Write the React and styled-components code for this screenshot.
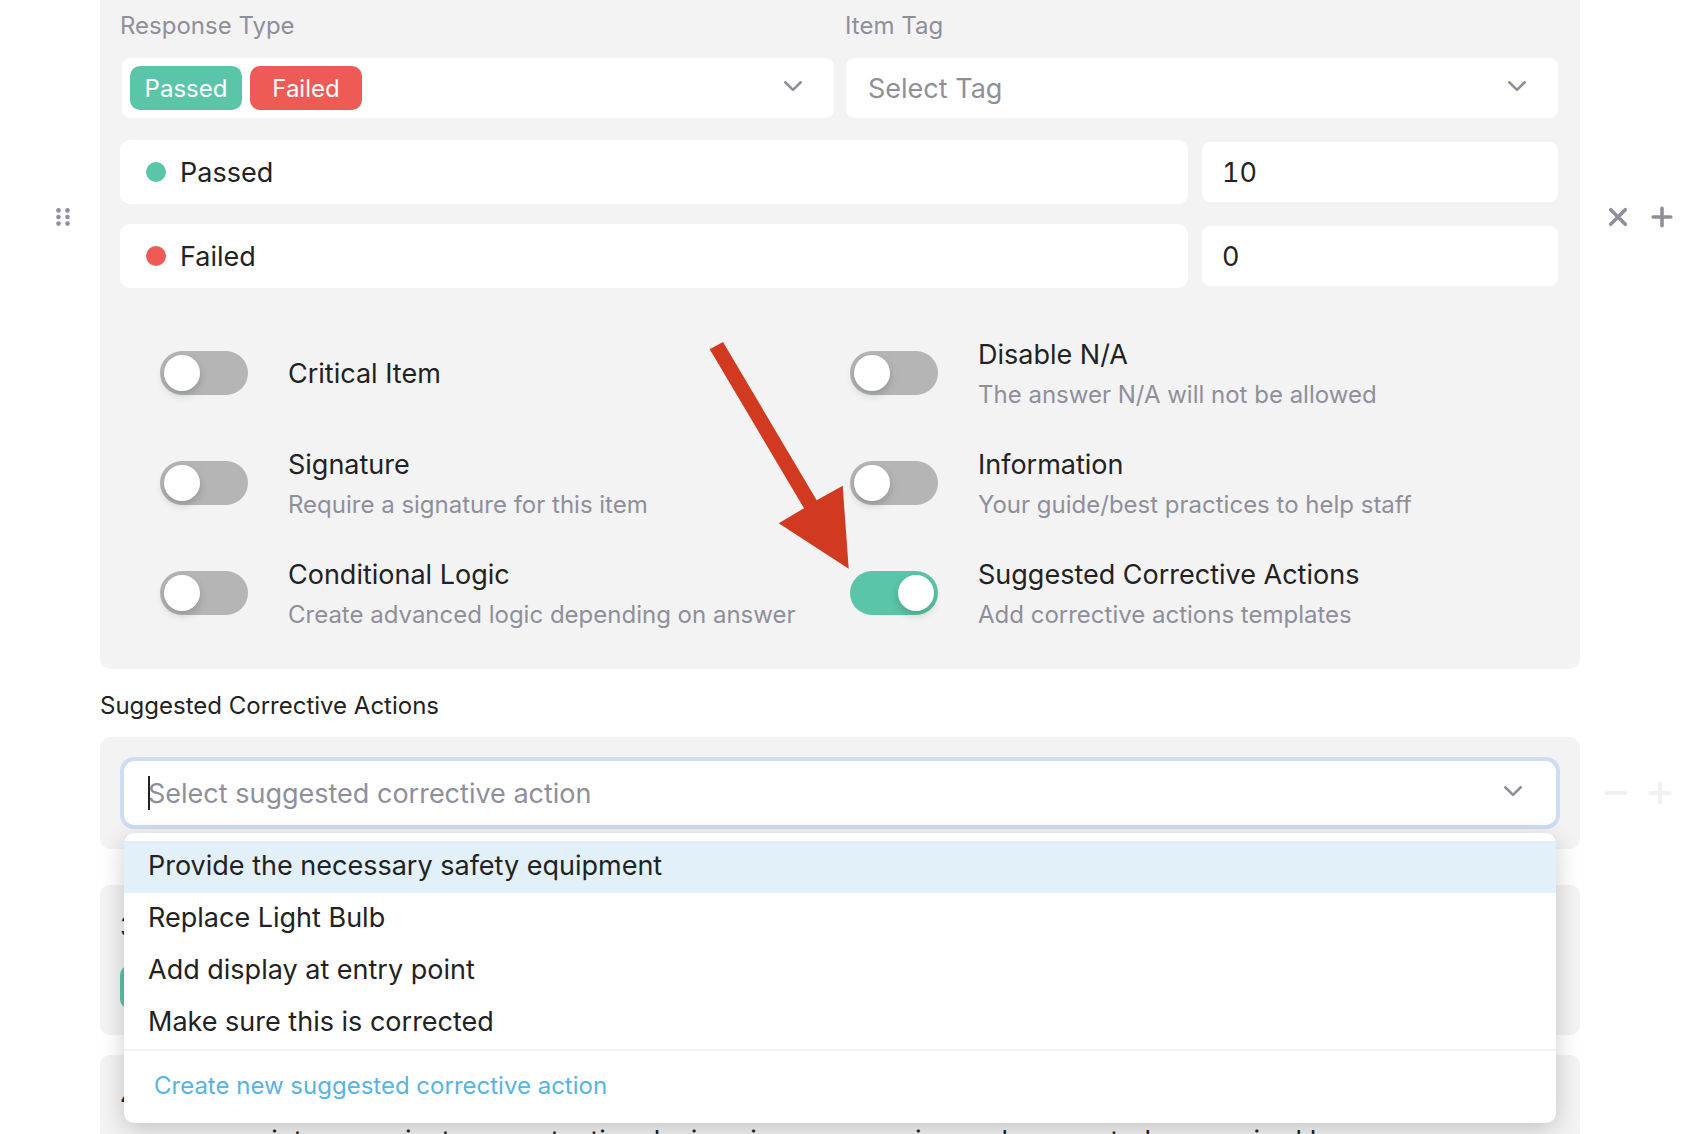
import { useState } from "react";
import styled, { createGlobalStyle } from "styled-components";

const SCORES = [
  { label: "Passed", score: "10", color: "#5bc5a9" },
  { label: "Failed", score: "0", color: "#ee5b56" },
];

const OPTIONS = [
  { id: "critical", title: "Critical Item" },
  {
    id: "disableNa",
    title: "Disable N/A",
    description: "The answer N/A will not be allowed",
  },
  {
    id: "signature",
    title: "Signature",
    description: "Require a signature for this item",
  },
  {
    id: "information",
    title: "Information",
    description: "Your guide/best practices to help staff",
  },
  {
    id: "logic",
    title: "Conditional Logic",
    description: "Create advanced logic depending on answer",
  },
  {
    id: "corrective",
    title: "Suggested Corrective Actions",
    description: "Add corrective actions templates",
    pointed: true,
  },
];

const SUGGESTIONS = [
  "Provide the necessary safety equipment",
  "Replace Light Bulb",
  "Add display at entry point",
  "Make sure this is corrected",
];

const ChevronIcon = () => (
  <svg width="18" height="11" viewBox="0 0 18 11" aria-hidden="true">
    <path
      d="M1.3 1.3 L9 8.9 L16.7 1.3"
      fill="none"
      stroke="#8f8f9b"
      strokeWidth="2.6"
      strokeLinecap="round"
      strokeLinejoin="round"
    />
  </svg>
);

const DragIcon = () => (
  <svg width="14" height="18" viewBox="0 0 14 18" fill="#8f8f9b" aria-hidden="true">
    {[2.4, 9, 15.6].map((y) => (
      <g key={y}>
        <circle cx="2.5" cy={y} r="2.3" />
        <circle cx="11.5" cy={y} r="2.3" />
      </g>
    ))}
  </svg>
);

const StrokeIcon = ({ d, size = 22, width = 3.6 }) => (
  <svg width={size} height={size} viewBox="0 0 22 22" aria-hidden="true">
    <path
      d={d}
      fill="none"
      stroke="currentColor"
      strokeWidth={width}
      strokeLinecap="round"
    />
  </svg>
);

const ArrowDrawing = () => (
  <svg width="140" height="228" viewBox="0 0 140 228" aria-hidden="true">
    <path
      d="M0.7 8.3 L14 1 L107.7 159.3 L133.7 144.7 L139.7 227.7 L69.7 182.3 L95 167.3 Z"
      fill="#d13a20"
    />
  </svg>
);

export default function App() {
  const [enabled, setEnabled] = useState({ corrective: true });
  const [scores, setScores] = useState(SCORES.map((item) => item.score));
  const [query, setQuery] = useState("");

  return (
    <Page>
      <GlobalStyle />
      <Row>
        <DragHandle aria-label="Move item">
          <DragIcon />
        </DragHandle>
        <ItemPanel>
          <LabelGrid>
            <FieldLabel id="response-type">Response Type</FieldLabel>
            <FieldLabel as="label" htmlFor="item-tag">
              Item Tag
            </FieldLabel>
          </LabelGrid>
          <SelectGrid>
            <TagSelect aria-labelledby="response-type" aria-haspopup="listbox">
              {SCORES.map((item) => (
                <Tag key={item.label} $color={item.color}>
                  {item.label}
                </Tag>
              ))}
              <ChevronSlot>
                <ChevronIcon />
              </ChevronSlot>
            </TagSelect>
            <SelectBox>
              <Select id="item-tag">
                <option>Select Tag</option>
              </Select>
              <ChevronSlot>
                <ChevronIcon />
              </ChevronSlot>
            </SelectBox>
          </SelectGrid>
          <ScoreList>
            {SCORES.map((item, index) => (
              <ScoreRow key={item.label}>
                <ScoreName htmlFor={`score-${index}`}>
                  <Dot $color={item.color} />
                  {item.label}
                </ScoreName>
                <ScoreInput
                  id={`score-${index}`}
                  value={scores[index]}
                  onChange={(e) =>
                    setScores((prev) =>
                      prev.map((s, i) => (i === index ? e.target.value : s))
                    )
                  }
                />
              </ScoreRow>
            ))}
          </ScoreList>
          <OptionGrid>
            {OPTIONS.map((option) => (
              <Option key={option.id}>
                <SwitchBox>
                  <Switch
                    id={option.id}
                    type="checkbox"
                    role="switch"
                    checked={!!enabled[option.id]}
                    onChange={(e) =>
                      setEnabled((prev) => ({
                        ...prev,
                        [option.id]: e.target.checked,
                      }))
                    }
                  />
                  {option.pointed && (
                    <Pointer>
                      <ArrowDrawing />
                    </Pointer>
                  )}
                </SwitchBox>
                <OptionLabel htmlFor={option.id}>
                  <OptionTitle>{option.title}</OptionTitle>
                  {option.description && (
                    <OptionText>{option.description}</OptionText>
                  )}
                </OptionLabel>
              </Option>
            ))}
          </OptionGrid>
        </ItemPanel>
        <Actions $top={195} $left={16}>
          <IconButton aria-label="Remove item">
            <StrokeIcon d="M3 3 L19 19 M19 3 L3 19" size={20} width={4} />
          </IconButton>
          <IconButton aria-label="Add item">
            <StrokeIcon d="M11 2.2 V19.8 M2.2 11 H19.8" />
          </IconButton>
        </Actions>
      </Row>

      <SectionLabel htmlFor="corrective-action">
        Suggested Corrective Actions
      </SectionLabel>
      <Row>
        <SuggestPanel>
          <Combo>
            <Caret />
            <ComboInput
              id="corrective-action"
              role="combobox"
              aria-expanded="true"
              aria-controls="suggestions"
              placeholder="Select suggested corrective action"
              value={query}
              onChange={(e) => setQuery(e.target.value)}
            />
            <ChevronSlot>
              <ChevronIcon />
            </ChevronSlot>
          </Combo>
          <Dropdown>
            <SuggestionList id="suggestions" role="listbox">
              {SUGGESTIONS.map((text, index) => (
                <Suggestion
                  key={text}
                  role="option"
                  aria-selected={index === 0}
                  $active={index === 0}
                >
                  {text}
                </Suggestion>
              ))}
            </SuggestionList>
            <DropdownFooter>
              <CreateLink href="#create">
                Create new suggested corrective action
              </CreateLink>
            </DropdownFooter>
          </Dropdown>
        </SuggestPanel>
        <Actions $top={34} $left={14} $faded>
          <IconButton aria-label="Remove corrective action">
            <StrokeIcon d="M2 11 H20" size={24} />
          </IconButton>
          <IconButton aria-label="Add corrective action">
            <StrokeIcon d="M11 2 V20 M2 11 H20" size={24} />
          </IconButton>
        </Actions>
      </Row>

      <NextItems>
        <NextItem>
          <ItemNumber>3.</ItemNumber>
          <TagRow>
            <Tag $color="#5bc5a9" />
          </TagRow>
        </NextItem>
        <NextItem>
          <ItemNumber>4.</ItemNumber>
          <ItemText>
            common points or against our protective devices in every service
            and connected as required by
          </ItemText>
        </NextItem>
      </NextItems>
    </Page>
  );
}

const GlobalStyle = createGlobalStyle`
  * {
    box-sizing: border-box;
  }
  body {
    margin: 0;
    background-color: #fff;
    color: #222;
    font-family: Inter, "Liberation Sans", sans-serif;
    font-size: 27px;
  }
  button, input, select {
    font: inherit;
    color: inherit;
    border: none;
    outline: none;
    padding: 0;
  }
`;

const Page = styled.main`
  height: 100vh;
  overflow: hidden;
`;

const Row = styled.div`
  display: grid;
  grid-template-columns: 100px 1fr 128px;
  align-items: start;
`;

const DragHandle = styled.button`
  justify-self: end;
  display: flex;
  justify-content: center;
  align-items: center;
  width: 44px;
  height: 44px;
  margin: 195px 15px 0 0;
  background: none;
  cursor: grab;
`;

const ItemPanel = styled.section`
  grid-column: 2;
  padding: 12px 22px 21px 20px;
  border-radius: 0 0 10px 10px;
  background-color: #f3f3f3;
`;

const LabelGrid = styled.div`
  display: grid;
  grid-template-columns: 1fr 1fr;
  gap: 12px;
  margin-bottom: 18px;
`;

const SelectGrid = styled.div`
  display: grid;
  grid-template-columns: 1fr 1fr;
  gap: 12px;
  padding-left: 2px;
`;

const FieldLabel = styled.span`
  font-size: 24px;
  line-height: 28px;
  color: #8f8f9b;
`;

const TagSelect = styled.button`
  display: flex;
  align-items: center;
  gap: 8px;
  height: 60px;
  padding: 0 32px 0 8px;
  border-radius: 8px;
  background-color: #fff;
  cursor: pointer;
`;

const Tag = styled.span`
  display: flex;
  justify-content: center;
  align-items: center;
  width: 112px;
  height: 44px;
  border-radius: 10px;
  background-color: ${(props) => props.$color};
  color: #fff;
  font-size: 24px;
`;

const ChevronSlot = styled.span`
  display: flex;
  margin-left: auto;
  padding-bottom: 4px;
  pointer-events: none;
`;

const SelectBox = styled.div`
  display: grid;
  grid-template-columns: 1fr 50px;
  align-items: center;
  height: 60px;
  border-radius: 8px;
  background-color: #fff;

  ${ChevronSlot} {
    grid-area: 1 / 2;
    margin-left: 0;
  }
`;

const Select = styled.select`
  grid-area: 1 / 1 / 2 / 3;
  height: 60px;
  padding-left: 22px;
  appearance: none;
  background: none;
  color: #8f8f9b;
`;

const ScoreList = styled.div`
  display: flex;
  flex-direction: column;
  gap: 20px;
  margin-top: 22px;
`;

const ScoreRow = styled.div`
  display: grid;
  grid-template-columns: 3fr 1fr;
  gap: 14px;
  align-items: center;
`;

const ScoreName = styled.label`
  display: flex;
  align-items: center;
  gap: 14px;
  height: 64px;
  padding-left: 26px;
  border-radius: 10px;
  background-color: #fff;
`;

const Dot = styled.span`
  width: 20px;
  height: 20px;
  border-radius: 50%;
  background-color: ${(props) => props.$color};
`;

const ScoreInput = styled.input`
  width: 100%;
  height: 60px;
  padding-left: 20px;
  border-radius: 8px;
  background-color: #fff;
  font-variant-numeric: tabular-nums;
`;

const OptionGrid = styled.div`
  display: grid;
  grid-template-columns: 1fr 1fr;
  grid-auto-rows: 110px;
  margin-top: 30px;
  padding: 0 18px 0 40px;
`;

const Option = styled.div`
  display: flex;
  align-items: center;
  gap: 40px;
`;

const SwitchBox = styled.div`
  position: relative;
  display: flex;
`;

const Switch = styled.input`
  display: flex;
  width: 88px;
  height: 44px;
  margin: 0;
  padding: 4px;
  appearance: none;
  border-radius: 22px;
  background-color: #b5b5b5;
  cursor: pointer;

  &::before {
    content: "";
    width: 36px;
    height: 36px;
    border-radius: 50%;
    background-color: #fff;
    box-shadow: 0 4px 8px rgba(0, 35, 11, 0.2);
  }

  &:checked {
    justify-content: flex-end;
    background-color: #5bc5a9;
  }
`;

// sits over the grid, its tip at the corner of the switch
const Pointer = styled.span`
  position: absolute;
  right: 100%;
  bottom: 100%;
  display: flex;
  padding: 0 1px 2px 0;
  pointer-events: none;
`;

const OptionLabel = styled.label`
  display: flex;
  flex-direction: column;
  padding-top: 2px;
  white-space: nowrap;
`;

const OptionTitle = styled.span`
  line-height: 42px;
`;

const OptionText = styled.span`
  font-size: 24px;
  line-height: 38px;
  color: #8f8f9b;
`;

const Actions = styled.div`
  grid-column: 3;
  display: flex;
  padding: ${(props) => props.$top}px 0 0 ${(props) => props.$left}px;
  color: ${(props) => (props.$faded ? "#f1f1f1" : "#8f8f9b")};
`;

const IconButton = styled.button`
  display: flex;
  justify-content: center;
  align-items: center;
  width: 44px;
  height: 44px;
  background: none;
  cursor: pointer;
`;

const SectionLabel = styled.label`
  display: block;
  padding: 23px 100px 17px;
  font-size: 24px;
  line-height: 28px;
`;

const SuggestPanel = styled.section`
  grid-column: 2;
  position: relative;
  padding: 20px;
  border-radius: 10px;
  background-color: #f3f3f3;
`;

const Combo = styled.div`
  position: relative;
  display: flex;
  align-items: center;
  height: 72px;
  padding: 0 34px 0 24px;
  border: 4px solid #cfddf4;
  border-radius: 14px;
  background-color: #fff;
`;

const Caret = styled.span`
  position: absolute;
  left: 24px;
  width: 2px;
  height: 34px;
  background-color: #222;
`;

const ComboInput = styled.input`
  flex: 1;
  height: 60px;
  background: none;
  caret-color: transparent;

  &::placeholder {
    color: #8f8f9b;
  }
`;

const Dropdown = styled.div`
  position: absolute;
  z-index: 1;
  top: 96px;
  left: 24px;
  right: 24px;
  padding-top: 8px;
  border-radius: 10px;
  background-color: #fff;
  box-shadow: 0 6px 24px rgba(0, 0, 0, 0.2);
`;

const SuggestionList = styled.ul`
  margin: 0;
  padding: 0;
  list-style: none;
`;

const Suggestion = styled.li`
  padding: 0 24px 2px;
  line-height: 50px;
  background-color: ${(props) => (props.$active ? "#e2f0fa" : "#fff")};
  cursor: pointer;
`;

const DropdownFooter = styled.div`
  display: flex;
  align-items: center;
  height: 74px;
  padding: 0 30px 4px;
  border-top: 2px solid #f3f3f3;
`;

const CreateLink = styled.a`
  color: #57b4e3;
  font-size: 24px;
  text-decoration: none;
`;

const NextItems = styled.div`
  display: flex;
  flex-direction: column;
  gap: 20px;
  padding: 36px 128px 0 100px;
`;

const NextItem = styled.section`
  padding: 20px 20px 26px;
  border-radius: 10px;
  background-color: #f3f3f3;
`;

const ItemNumber = styled.div`
  line-height: 44px;
`;

const TagRow = styled.div`
  display: flex;
  gap: 8px;
  padding-top: 16px;
`;

const ItemText = styled.div`
  line-height: 44px;
  white-space: nowrap;
`;
